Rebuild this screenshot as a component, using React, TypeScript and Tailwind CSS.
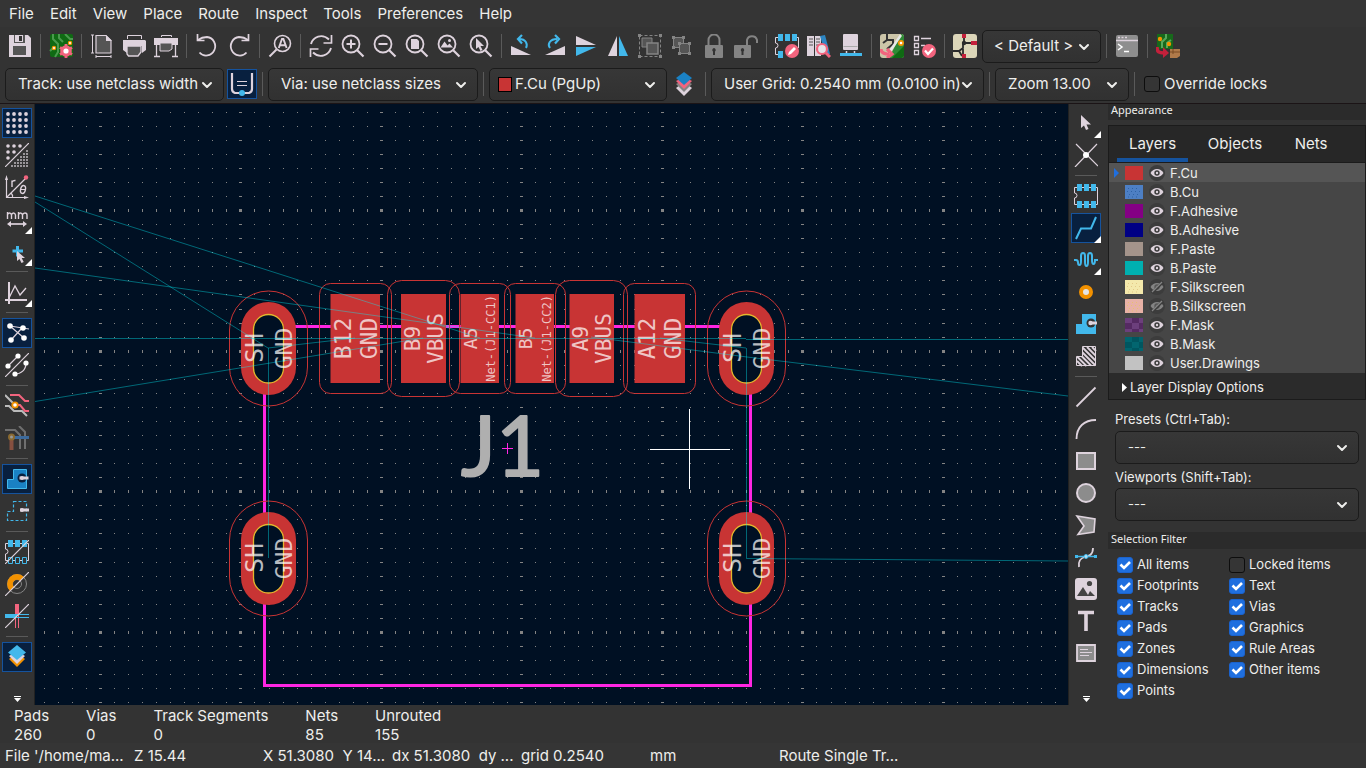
import React from "react";
import { ChevronDown } from "lucide-react";

type IconProps = { children: React.ReactNode; className?: string };

const Icon = ({ children, className = "h-6 w-6" }: IconProps) => (
  <svg viewBox="0 0 24 24" fill="none" className={`block shrink-0 ${className}`}>
    {children}
  </svg>
);

const L = "#ded3dd";
const B = "#42b8eb";
const R = "#f2647e";
const O = "#f29100";
const G = "#848484";

const Magnifier = ({ children }: { children?: React.ReactNode }) => (
  <Icon>
    <circle cx="10" cy="10" r="8.5" stroke={L} strokeWidth="1.8" />
    <path d="M16 16l6.5 6.5" stroke={L} strokeWidth="2.2" />
    {children}
  </Icon>
);

const icons: Record<string, React.ReactNode> = {
  save: (
    <Icon>
      <path d="M1 1h19l3 3v19H1z" fill={L} />
      <path d="M6 1h11v8H6z" fill="#555" />
      <path d="M7 1h8v7H7z" fill={L} />
      <path d="M11 2h3v5h-3z" fill="#333" />
      <path d="M5 12h13v9H5z" fill="#555" />
    </Icon>
  ),
  boardSetup: (
    <Icon>
      <rect x="1" width="23" height="23" rx="2" fill="#0f6a13" />
      <path d="M4 0v5l5 5v8l-3 5M10 0v4l4 4M16 0l5 5h3M1 17l4-4" stroke="#4a9a4d" strokeWidth="2" />
      <circle cx="5" cy="14" r="1.600" fill="#fff" stroke={O} strokeWidth="1.200" />
      <circle cx="21" cy="9" r="1.600" fill="#fff" stroke={O} strokeWidth="1.200" />
      <circle cx="17" cy="17" r="4.200" stroke={R} strokeWidth="3.200" />
      <path
        d="M17 10v14M11 13.500l12 7M11 20.500l12-7"
        stroke={R}
        strokeWidth="2.800"
      />
      <circle cx="17" cy="17" r="2.600" fill="#fff" />
    </Icon>
  ),
  pageSetup: (
    <Icon>
      <path d="M6 1.500h10l5 5V19H6z" fill="#555" stroke={L} strokeWidth="1.2" />
      <path d="M16 1v6h6z" fill={L} />
      <path d="M2.500 1v18M1 1h3M1 19h3M6 22.500h15M6 21v3M21 21v3" stroke={L} />
    </Icon>
  ),
  print: (
    <Icon>
      <path d="M5.500 5V1.500h14V5" stroke={L} />
      <path d="M1 6h22l1 1v9l-4 3V12H5v7l-4-3z" fill={L} />
      <path d="M5 12h14v6l-3 4H6.500L5 20z" fill="#555" stroke={L} strokeWidth="1.3" />
    </Icon>
  ),
  plot: (
    <Icon>
      <path d="M7.500 3V1.500h10V3" stroke={L} />
      <path d="M0 4h24v7H0z" fill={L} />
      <path d="M6 9h12v6l-3 2H6z" fill="#555" stroke={L} />
      <path d="M2.500 11v12M21.500 11v12M0 22.500h6M18 22.500h6" stroke={L} strokeWidth="1.3" />
    </Icon>
  ),
  undo: (
    <Icon>
      <path d="M3 6Q7 3 12 3a9 9.300 0 1 1-7.500 15.500" stroke={L} strokeWidth="1.8" />
      <path d="M2.500 0v6.500H9.500" stroke={L} strokeWidth="1.700" />
    </Icon>
  ),
  redo: (
    <Icon>
      <path d="M21 6Q17 3 12 3a9 9.300 0 1 0 7.500 15.500" stroke={L} strokeWidth="1.8" />
      <path d="M21.500 0v6.500H14.500" stroke={L} strokeWidth="1.700" />
    </Icon>
  ),
  find: (
    <Icon>
      <circle cx="14.500" cy="9.500" r="8" stroke={L} strokeWidth="1.6" />
      <path d="M8.500 15.500L1.500 22.500" stroke={L} strokeWidth="2" />
      <path d="M10.800 14l3.200-9h1.400l3.200 9M12.200 11.300h5" stroke={L} strokeWidth="1.9" />
    </Icon>
  ),
  refresh: (
    <Icon>
      <path d="M2 10C4 3 13-1 20 5.500M22 14c-2 7-11 11-18 4.500" stroke={L} strokeWidth="1.9" />
      <path d="M22.500 1v8h-8M1.500 23v-8h8" stroke={L} strokeWidth="1.7" />
    </Icon>
  ),
  zoomIn: (
    <Magnifier>
      <path d="M5.500 10h9M10 5.500v9" stroke={L} strokeWidth="2" />
    </Magnifier>
  ),
  zoomOut: (
    <Magnifier>
      <path d="M5.500 10h9" stroke={L} strokeWidth="2" />
    </Magnifier>
  ),
  zoomFit: (
    <Magnifier>
      <path d="M6 5h6l2 2v8H6z" fill={L} />
    </Magnifier>
  ),
  zoomObjects: (
    <Magnifier>
      <path d="M3.500 13.500l4-6 3 4 2-2 3.500 4z" fill={L} />
      <circle cx="12.500" cy="6.500" r="1.500" fill={L} />
    </Magnifier>
  ),
  zoomSelection: (
    <Magnifier>
      <path d="M7 4v11l2.500-2 2 4 2-1-2-4H15z" fill={L} />
    </Magnifier>
  ),
  rotateCcw: (
    <Icon>
      <path d="M1 12v9h20z" fill={L} />
      <path d="M16 14c2-4 0-9-7-9" stroke={B} strokeWidth="2" />
      <path d="M12 1L8 5l4 4.500" stroke={B} strokeWidth="2.200" />
    </Icon>
  ),
  rotateCw: (
    <Icon>
      <path d="M23 12v9H3z" fill={L} />
      <path d="M8 14C5 10 8 5 15 5" stroke={B} strokeWidth="2" />
      <path d="M13 1l4 4-4 4.500" stroke={B} strokeWidth="2.200" />
    </Icon>
  ),
  flipV: (
    <Icon>
      <path d="M2 2l20 9H2z" fill={L} />
      <path d="M2 22l20-9H2z" fill={B} />
    </Icon>
  ),
  flipH: (
    <Icon>
      <path d="M11 2v20H2z" fill={L} />
      <path d="M13 2v20h9z" fill={B} />
    </Icon>
  ),
  group: (
    <Icon>
      <path d="M1.500 1.500h21v21h-21z" stroke={G} strokeDasharray="3 2" />
      <path d="M4 4h10v9H4z" fill="#555" stroke={G} />
      <path d="M9 9h11v11H9z" fill="#555" stroke={G} strokeWidth="1.500" />
      <path d="M0 0h3v3H0zM21 0h3v3h-3zM0 21h3v3H0zM21 21h3v3h-3z" fill={G} />
    </Icon>
  ),
  ungroup: (
    <Icon>
      <path d="M3.500 3.500h10v10h-10z" fill="#555" stroke={G} />
      <path d="M9.500 9.500h10v10h-10z" fill="#555" stroke={G} />
      <path d="M2 2h3v3H2zM12 2h3v3h-3zM2 12h3v3H2zM8 8h3v3H8zM18 8h3v3h-3zM8 18h3v3H8zM18 18h3v3h-3z" fill={G} />
    </Icon>
  ),
  lock: (
    <Icon>
      <path d="M6.500 11V6a5.500 5.500 0 0 1 11 0v5" stroke={G} strokeWidth="2" />
      <rect x="3" y="11" width="18" height="13" rx="1" fill={G} />
      <path d="M12 14a2 2 0 0 1 1 3.500V21h-2v-3.500A2 2 0 0 1 12 14z" fill="#333" />
    </Icon>
  ),
  unlock: (
    <Icon>
      <path d="M13 11V6a5.200 5.200 0 0 1 10 0v3" stroke={G} strokeWidth="2" />
      <rect x="0" y="11" width="17" height="13" rx="1" fill={G} />
      <path d="M8.500 14a2 2 0 0 1 1 3.500V21h-2v-3.500a2 2 0 0 1 1-3.500z" fill="#333" />
    </Icon>
  ),
  footprintEdit: (
    <Icon>
      <path d="M4 3.500H.500V9a2.500 2.500 0 0 1 0 5v6.500H4M21 3.500h2.500V14" stroke={L} />
      <path d="M3 0h5v7H3zM10 0h5v7h-5zM17 0h5v7h-5zM3 17h5v7H3z" fill={B} />
      <circle cx="17" cy="17" r="7" fill={R} />
      <path d="M13 21l1-3 5-5 2 2-5 5z" fill="#fff" />
    </Icon>
  ),
  footprintLibrary: (
    <Icon>
      <path d="M0 2h7v20H0zM8 2h6v20H8z" fill={L} />
      <path d="M2 5h4M2 8h4M2 11h4M9 5h4M9 8h4M9 11h4" stroke="#555" />
      <path d="M13 2l5-1 5 19-4 1z" fill="#2d86c3" />
      <circle cx="15" cy="15" r="5" fill="#e5e5ea" stroke={R} strokeWidth="2.200" />
      <path d="M19 19l4 4" stroke={R} strokeWidth="3" />
    </Icon>
  ),
  updatePcb: (
    <Icon>
      <rect x="4" y="0" width="15" height="16" rx="1" fill={L} />
      <path d="M4.500 12.500h14" stroke="#aaa" />
      <path d="M7.500 17v3M15.500 17v3" stroke={L} strokeWidth="1.500" />
      <path d="M1 19h22v3H1z" fill={B} />
    </Icon>
  ),
  schematicUpdate: (
    <Icon>
      <rect width="24" height="24" rx="3" fill="#ccc5a8" />
      <path d="M21 0q3 0 3 3v18q0 3-3 3H9z" fill="#2f8a35" />
      <path d="M24 12v9q0 3-3 3H12z" fill="#0f6a13" />
      <path d="M7 0v6l-4 3M7 6h6v4l-6 5" stroke="#333" strokeWidth="2" />
      <path d="M21 1L8 20" stroke="#e8e8e8" strokeWidth="2.500" />
      <circle cx="21" cy="9" r="2.200" fill="#fff" stroke={O} strokeWidth="1.700" />
      <path d="M1 15c0 4 3 5 8 5M7 15l5 5-5 4" stroke={R} strokeWidth="3.200" />
    </Icon>
  ),
  drc: (
    <Icon>
      <path d="M2.500 2.500h4v4h-4zM2.500 9.500h4v4h-4zM2.500 16.500h4v4h-4zM9 4.500h10M9 11.500h4" stroke={L} strokeWidth="1.300" />
      <circle cx="17" cy="17" r="7" fill={R} />
      <path d="M13 16.500l3 3.500 5-5.500" stroke="#fff" strokeWidth="2.200" />
    </Icon>
  ),
  schematic: (
    <Icon>
      <rect width="24" height="24" rx="3" fill="#dcd6b9" />
      <path d="M11 4v5M0 17h6l4-3V9h8M10 15v9M6 17l3 5" stroke="#2b2b2b" strokeWidth="1.800" />
      <circle cx="11" cy="9" r="2.200" fill="#2b2b2b" />
      <path d="M9 0h4v4H9zM18 7h6v4h-6zM9 20h4v4H9z" fill="#c4203b" />
    </Icon>
  ),
  terminal: (
    <Icon>
      <rect x="1" y="1" width="22" height="22" rx="2" fill="#8e8e8e" />
      <path d="M1 6.500h22" stroke={L} strokeWidth="1.500" />
      <path d="M3 3.500h2M6.500 3.500h2M10 3.500h2" stroke={L} strokeWidth="1.500" />
      <path d="M3 10l4 3-4 3M9 17.500h5" stroke="#fff" strokeWidth="1.500" />
    </Icon>
  ),
  plugin: (
    <Icon>
      <rect x="1" y="0" width="16" height="15" fill="#17691b" />
      <path d="M6 14V8l4-4V0M11 14V9l4-3" stroke="#58a85b" strokeWidth="2" />
      <circle cx="4" cy="5" r="2.200" fill={O} />
      <circle cx="13" cy="10" r="2.200" fill={O} />
      <path d="M1 13c0 5 2 6 7 6" stroke="#c4203b" strokeWidth="3.500" />
      <path d="M7 13l6 6-6 5z" fill="#c4203b" />
      <path d="M14 15h10v7l-3 2h-7z" fill="#b07a4a" />
      <path d="M17 15v5M14 18h10" stroke="#7a4b22" />
    </Icon>
  ),
  trackAuto: (
    <Icon>
      <path d="M2 1v16q0 3 3 4h14q3-1 3-4V1" stroke={L} strokeWidth="2.200" />
      <path d="M7 9.500h10M7 13.500h10" stroke={L} />
      <circle cx="12" cy="21" r="3" fill={B} />
    </Icon>
  ),
  layerPair: (
    <Icon>
      <path d="M12 10l8 6-8 8-8-8z" fill={L} />
      <path d="M12 8l8 4-8 8-8-8z" fill={G} />
      <path d="M12 5l8 4-8 8-8-8z" fill={R} />
      <path d="M12 0l8 6-8 7-8-7z" fill="#1a81c4" />
    </Icon>
  ),
  gridDots: (
    <Icon>
      {[3, 9, 15, 21].map((y) => [3, 9, 15, 21].map((x) => <circle key={`${x}-${y}`} cx={x} cy={y} r="1.900" fill={L} />))}
    </Icon>
  ),
  gridOverride: (
    <Icon>
      <g fill={L}>
        <circle cx="3" cy="3" r="1.800" />
        <circle cx="9" cy="3" r="1.800" />
        <circle cx="15" cy="3" r="1.800" />
        <circle cx="3" cy="9" r="1.800" />
        <circle cx="9" cy="9" r="1.800" />
        <circle cx="3" cy="15" r="1.800" />
      </g>
      <path
        d="M21 8h2M18 11h5M15 14h8M12 17h11M9 20h14M6 23h17"
        stroke="#9a969a"
        strokeWidth="2"
        strokeDasharray="2 1"
      />
      <path d="M0 24L24 0" stroke={L} strokeWidth="1.200" />
    </Icon>
  ),
  polar: (
    <Icon>
      <path d="M1.500 23V3M1 22.500h21" stroke={L} strokeWidth="1.200" />
      <path d="M0 5l1.500-5L3 5zM19 21l5 1.500-5 1.500z" fill={L} />
      <path d="M2 22L21 3M6 18q2 2 1.500 4" stroke={L} strokeWidth="1.200" />
      <circle cx="21" cy="2.500" r="2.200" fill={R} />
      <path d="M7 12V5.500M7 7q1-1.700 3.500-1.500" stroke={L} strokeWidth="1.400" />
      <ellipse cx="18" cy="14.500" rx="2.400" ry="4" stroke={L} strokeWidth="1.400" transform="rotate(14 18 14.500)" />
      <path d="M16 14.500h4" stroke={L} />
    </Icon>
  ),
  millimeters: (
    <Icon>
      <path
        d="M2.500 12V5M2.500 8q.5-2 2-2t2 2v4M6.500 8q.5-2 2-2t2 2v4M13.500 12V5M13.500 8q.5-2 2-2t2 2v4M17.500 8q.5-2 2.500-2t2 2v4"
        stroke={L}
        strokeWidth="1.400"
      />
      <path d="M4 17h16" stroke={L} strokeWidth="1.700" />
      <path d="M2 17l4-3v6zM22 17l-4-3v6z" fill={L} />
    </Icon>
  ),
  cursorFull: (
    <Icon>
      <path d="M12.500 7v10.500M7.500 12h10.500" stroke={B} strokeWidth="3" />
      <path d="M12 12v10l2.500-2 2 4 2.200-1-2-4H20z" fill={L} />
    </Icon>
  ),
  plotAxes: (
    <Icon>
      <path d="M4 2v22M0 20h22" stroke={L} strokeWidth="2" />
      <path d="M4 18l6-12 5 9 6-7" stroke={L} strokeWidth="1.300" />
    </Icon>
  ),
  ratsnest: (
    <Icon>
      <path d="M5 5l19 3M17 7L6 19M5 5l14 12" stroke={L} strokeWidth="1.200" />
      <g fill="#fff">
        <circle cx="5" cy="5" r="2.800" />
        <circle cx="18" cy="7" r="2.800" />
        <circle cx="6" cy="19" r="2.800" />
        <circle cx="19" cy="17" r="2.800" />
      </g>
    </Icon>
  ),
  ratsnestCurved: (
    <Icon>
      <path d="M0 24L24 0M3 13L13 3M21 10c0 7-5 11-11 11" stroke={L} strokeWidth="1.200" />
      <g fill="#fff">
        <circle cx="13" cy="3" r="2.600" />
        <circle cx="3" cy="13" r="2.600" />
        <circle cx="21" cy="10" r="2.600" />
        <circle cx="10" cy="21" r="2.600" />
      </g>
    </Icon>
  ),
  netHighlight: (
    <Icon>
      <path d="M5 1h9l6 6h4M10 11h5l5 6h4" stroke={R} strokeWidth="2" />
      <path d="M0 1l9 9M0 12h4l5 5h8l5 5" stroke="#bbb" strokeWidth="2" />
      <circle cx="10" cy="11" r="2.700" fill="#fff" stroke={O} strokeWidth="1.800" />
    </Icon>
  ),
  netDim: (
    <Icon>
      <path d="M0 4h10l5 5v14M14 0l6 6v17" stroke="#6f6f6f" strokeWidth="2" />
      <path d="M6.500 12v12" stroke="#875040" strokeWidth="4" />
      <path d="M8 11.500h16" stroke="#3c6a9c" strokeWidth="3" />
      <circle cx="6.500" cy="11" r="2.500" fill="#999" stroke="#8a6a30" strokeWidth="2" />
    </Icon>
  ),
  zoneFill: (
    <Icon>
      <path d="M8.500 2.500h13v19h-19v-9h6z" fill="#1a81c4" stroke={B} />
      <circle cx="17" cy="11" r="4.500" fill="#08203f" />
      <path d="M14.500 9.500h9v3h-9z" fill={L} />
      <circle cx="17" cy="11" r="2" fill={L} />
    </Icon>
  ),
  zoneOutline: (
    <Icon>
      <path d="M8.500 2.500h13v19h-19v-9h6z" stroke={B} strokeWidth="1.200" strokeDasharray="3 2" />
      <path d="M15 9.500h9v3h-9z" fill={L} />
      <circle cx="17" cy="11" r="2" fill={L} />
    </Icon>
  ),
  padSketch: (
    <Icon>
      <path d="M.500 3.500h23v17H.500V14a2.500 2.500 0 0 0 0-5z" stroke={L} />
      <path d="M3 0h5v7H3zM10 0h5v7h-5zM17 0h5v7h-5z" fill={B} />
      <path d="M3.500 17.500h4v6h-4zM10.500 17.500h4v6h-4zM17.500 17.500h4v6h-4z" fill="#333" stroke={B} />
      <path d="M0 24L24 0" stroke={L} strokeWidth="1.200" />
    </Icon>
  ),
  viaSketch: (
    <Icon>
      <circle cx="12" cy="12" r="9.500" stroke={G} />
      <circle cx="12" cy="12" r="4.500" stroke={G} />
      <path d="M5 19A9.800 9.800 0 0 1 19 5l-4 4a4 4 0 0 0-6 6z" fill={O} />
      <path d="M0 24L24 0" stroke={L} strokeWidth="1.200" />
    </Icon>
  ),
  trackSketch: (
    <Icon>
      <path d="M12 0v12" stroke={R} strokeWidth="4" />
      <path d="M10.500 12v12M13.500 12v12" stroke={R} />
      <path d="M0 12h12" stroke={B} strokeWidth="4" />
      <path d="M12 10.500h12M12 13.500h12" stroke={B} />
      <path d="M0 24L24 0" stroke={L} strokeWidth="1.200" />
    </Icon>
  ),
  layersManager: (
    <Icon>
      <path d="M12 8l8 6-8 8-8-8z" fill={O} />
      <path d="M12 6l8 5-8 8-8-8z" fill={L} />
      <path d="M12 0l9 7.500-9 7.500-9-7.500z" fill={B} />
    </Icon>
  ),
  arrow: (
    <Icon>
      <path d="M7 4v13l3-2.500 2 4.500 2.500-1-2-4.500H17z" fill={L} />
    </Icon>
  ),
  localRats: (
    <Icon>
      <path d="M2 1l22 22M23 1L1 24" stroke={L} strokeWidth="1.200" />
      <circle cx="12" cy="12" r="3" fill="#fff" />
    </Icon>
  ),
  footprint: (
    <Icon>
      <path d="M.500 3.500h23v17H.500V14a2.500 2.500 0 0 0 0-5z" stroke={L} />
      <path d="M3 0h5v7H3zM10 0h5v7h-5zM17 0h5v7h-5zM3 17h5v7H3zM10 17h5v7h-5zM17 17h5v7h-5z" fill={B} />
    </Icon>
  ),
  route: (
    <Icon>
      <path d="M2 23l5-10.500h10L22 1" stroke={B} strokeWidth="2" />
    </Icon>
  ),
  tune: (
    <Icon>
      <path
        d="M0 12h2q2 0 2 2.500t1.500 2.500T7 13V8q0-3 2-3t2 3v6q0 4 1.500 4t1.500-4V8q0-3 2-3t2 3v4q0 4 1.500 4t1.500-4h3"
        stroke={B}
        strokeWidth="2"
      />
    </Icon>
  ),
  via: (
    <Icon>
      <circle cx="12" cy="12" r="5" fill="#e5e5e5" stroke={O} strokeWidth="4" />
    </Icon>
  ),
  zone: (
    <Icon>
      <path d="M8 2h14v20H2V12h6z" fill={B} />
      <circle cx="17" cy="11" r="4.500" fill="#333" />
      <path d="M16 9.500h7v3h-7z" fill={L} />
      <circle cx="16.500" cy="11" r="2.200" fill={L} />
    </Icon>
  ),
  ruleArea: (
    <Icon>
      <path d="M8.500 2.500h13v19h-19v-9h6z" stroke={L} />
      <path d="M3 17l5 5M3 12.500l9.500 9.500M8 12.500l9 9M8.500 8.500l13 13M8.500 3.500l13 13M13 3l8.500 8.500M18 3l4 4" stroke={L} strokeWidth="1.900" />
    </Icon>
  ),
  line: (
    <Icon>
      <path d="M2.500 21.500l19-19" stroke={L} strokeWidth="1.800" />
    </Icon>
  ),
  arc: (
    <Icon>
      <path d="M2.500 22C2.500 10 10 3 22 3" stroke={L} strokeWidth="1.800" />
    </Icon>
  ),
  rect: (
    <Icon>
      <path d="M3 4h18v16H3z" fill="#8c8c8c" stroke={L} strokeWidth="2" />
    </Icon>
  ),
  circle: (
    <Icon>
      <circle cx="12" cy="12" r="9" fill="#8c8c8c" stroke={L} strokeWidth="2" />
    </Icon>
  ),
  polygon: (
    <Icon>
      <path d="M3 3l18 3-1 13L4 21.500 10 13z" fill="#8c8c8c" stroke={L} strokeWidth="1.600" />
    </Icon>
  ),
  bezier: (
    <Icon>
      <path d="M5 22c-1-7 2-9 6-10s8-2 8-9" stroke={L} strokeWidth="1.800" />
      <path d="M2 11.500h20" stroke={B} strokeWidth="1.500" />
      <path d="M1 10h3v3H1zM20 10h3v3h-3z" fill={B} />
      <circle cx="12" cy="11.500" r="2" fill="#b5e0f5" stroke={B} />
    </Icon>
  ),
  image: (
    <Icon>
      <rect x="1" y="1" width="22" height="22" rx="3" fill={L} />
      <path d="M3 19l6-9 5 8 2-4 5 5z" fill="#444" />
      <circle cx="15.500" cy="6.500" r="2.600" fill="#444" />
    </Icon>
  ),
  text: (
    <Icon>
      <path d="M4 3.500h16M12 3v19" stroke={L} strokeWidth="3.600" />
    </Icon>
  ),
  textbox: (
    <Icon>
      <path d="M3 4h18v16H3z" fill="#8c8c8c" stroke={L} strokeWidth="1.800" />
      <path d="M6 8.500h8M6 11.500h12M6 14.500h9" stroke={L} strokeWidth="1.200" />
    </Icon>
  ),
};

const topRow = [
  "save", "|", "boardSetup", "|", "pageSetup", "print", "plot", "|", "undo", "redo", "|", "find", "|",
  "refresh", "zoomIn", "zoomOut", "zoomFit", "zoomObjects", "zoomSelection", "|",
  "rotateCcw", "rotateCw", "flipV", "flipH", "group", "ungroup", "lock", "unlock", "|",
  "footprintEdit", "footprintLibrary", "updatePcb", "|", "schematicUpdate", "drc", "|", "schematic",
];

const leftTools = [
  "gridDots*", "gridOverride", "polar", "millimeters+", "cursorFull+", "|", "plotAxes+", "|", "ratsnest*", "ratsnestCurved", "|",
  "netHighlight", "netDim", "|", "zoneFill*", "zoneOutline", "|", "padSketch", "viaSketch", "trackSketch", "|", "layersManager*",
];

const rightTools = [
  "arrow+", "localRats", "|", "footprint", "route*+", "tune+", "via", "zone", "ruleArea", "|",
  "line", "arc", "rect", "circle", "polygon", "bezier", "image", "text", "textbox",
];

const VSep = () => <div className="mx-1 h-6 w-px shrink-0 bg-[#5a5a5a]" />;

const TopButton = ({ name }: { name: string }) => (
  <button type="button" aria-label={name} className="flex h-8 w-8 shrink-0 items-center justify-center">
    {icons[name]}
  </button>
);

// "*" marks an active tool, "+" marks one with a palette
const SideBar = ({ tools, className }: { tools: string[]; className: string }) => (
  <div className={`flex shrink-0 flex-col pt-[3px] ${className}`}>
    <div className="flex w-[34px] grow flex-col items-center">
      {tools.map((tool, i) =>
        tool === "|" ? (
          <div key={i} className="my-1 h-px w-[22px] shrink-0 bg-[#5a5a5a]" />
        ) : (
          <button
            key={i}
            type="button"
            aria-label={tool.replace(/[*+]/g, "")}
            className={`relative my-px flex h-[30px] w-[30px] shrink-0 items-center justify-center border ${
              tool.includes("*") ? "border-[#15539e] bg-[#08203f]" : "border-transparent"
            }`}
          >
            {icons[tool.replace(/[*+]/g, "")]}
            {tool.includes("+") && (
              <svg viewBox="0 0 7 7" className="absolute -right-px -bottom-px h-[7px] w-[7px]">
                <path d="M7 0v7H0z" fill="#fff" />
              </svg>
            )}
          </button>
        )
      )}
      <button type="button" aria-label="More tools" className="mt-auto mb-[3px]">
        <svg viewBox="0 0 7 6" className="block h-[6px] w-[7px]">
          <path d="M0 0h7v1H0zM0 2h7L3.500 6z" fill="#fff" />
        </svg>
      </button>
    </div>
  </div>
);

type ComboProps = { label: string; value: string; className?: string; selectClass?: string; swatch?: boolean };

const Combo = ({ label, value, className = "", selectClass = "pl-3 text-[15px]", swatch }: ComboProps) => (
  <div className={`relative h-[33px] shrink-0 ${className}`}>
    <select
      aria-label={label}
      className={`h-full w-full appearance-none rounded-[5px] border border-[#1b1b1b] bg-linear-to-b from-[#373737] to-[#313131] pr-5 text-[#eeeeec] ${selectClass}`}
    >
      <option>{value}</option>
    </select>
    {swatch && <span className="pointer-events-none absolute top-[9px] left-[9px] h-[15px] w-[14px] border border-black bg-[#c83434]" />}
    <ChevronDown className="pointer-events-none absolute top-[9px] right-[9px] h-4 w-4 text-[#eeeeec]" strokeWidth={3} />
  </div>
);

const Check = ({ label, checked, className = "text-[13px]" }: { label: string; checked: boolean; className?: string }) => (
  <label className={`flex h-[21px] items-center gap-1 whitespace-nowrap ${className}`}>
    <span className="relative block h-4 w-4 shrink-0">
      <input
        type="checkbox"
        defaultChecked={checked}
        className="peer block h-4 w-4 appearance-none rounded-[3px] border border-[#0d0d0d] bg-[#353535] checked:border-[#1b62cc] checked:bg-[#1f6fdf]"
      />
      <svg viewBox="0 0 16 16" fill="none" className="pointer-events-none absolute inset-0 hidden peer-checked:block">
        <path d="M3.500 7.500l3.500 3.500L13 5" stroke="#fff" strokeWidth="2.600" />
      </svg>
    </span>
    {label}
  </label>
);

const layers = [
  { name: "F.Cu", color: "#c83434", visible: true },
  { name: "B.Cu", color: "#4d7fc4", dots: "#2f62a5", visible: true },
  { name: "F.Adhesive", color: "#840084", visible: true },
  { name: "B.Adhesive", color: "#000084", visible: true },
  { name: "F.Paste", color: "#a4948b", visible: true },
  { name: "B.Paste", color: "#00b0b0", visible: true },
  { name: "F.Silkscreen", color: "#f4e9ac", dots: "#e3c987", visible: false },
  { name: "B.Silkscreen", color: "#e8b2a7", dots: "#e8c070", visible: false },
  { name: "F.Mask", color: "#6c3f7c", checker: "#552a62", visible: true },
  { name: "B.Mask", color: "#02656f", checker: "#005660", visible: true },
  { name: "User.Drawings", color: "#c2c2c2", visible: true },
];

const Eye = ({ open }: { open: boolean }) => (
  <svg viewBox="0 0 16 16" fill="none" className="h-4 w-4">
    <circle cx="8" cy="8" r="8" fill="#3c3c3c" />
    <path d="M1.500 8Q4 4 8 4t6.500 4Q12 12 8 12T1.500 8z" fill={open ? L : G} />
    <circle cx="8" cy="8" r="2.700" fill={open ? "#3c3c3c" : "#555"} />
    <circle cx="8" cy="8" r="1.200" fill={open ? L : G} />
    {!open && <path d="M3 14L14 3" stroke="#3c3c3c" strokeWidth="2.500" />}
    {!open && <path d="M3 13L13 3" stroke={G} strokeWidth="1.200" />}
  </svg>
);

const Appearance = () => (
  <aside className="flex w-[258px] shrink-0 flex-col text-[13px]">
    <h2 className="h-4 bg-[#2b2b2b] pl-[3px] font-['Noto_Sans'] text-[11px] leading-[12px]">Appearance</h2>
    <div className="mt-[5px] border border-[#1b1b1b]">
      <div role="tablist" className="flex h-[37px] gap-2 border-b border-[#1b1b1b] bg-[#272727] pl-2 text-[15px]">
        <button type="button" role="tab" aria-selected="true" className="w-[71px] border-b-4 border-[#15539e] pt-1">
          Layers
        </button>
        <button type="button" role="tab" className="w-[78px] border-b-4 border-transparent pt-1">
          Objects
        </button>
        <button type="button" role="tab" className="w-[58px] border-b-4 border-transparent pt-1">
          Nets
        </button>
      </div>
      <ul className="bg-[#464646] pb-px">
        {layers.map((layer, i) => (
          <li key={layer.name} className={`flex h-[19px] items-center pt-px pl-[5px] ${i === 0 ? "bg-[#555555]" : ""}`}>
            <svg viewBox="0 0 5 10" className="h-[10px] w-[5px]">
              {i === 0 && <path d="M0 0l5 5-5 5z" fill="#1f6fdf" />}
            </svg>
            <svg viewBox="0 0 18 14" className="ml-[6px] h-[14px] w-[18px]">
              <path d="M0 0h18v14H0z" fill={layer.color} />
              {layer.checker && <path d="M7 0h7v5H7zM0 5h7v6H0zM14 5h4v6h-4zM7 11h7v3H7z" fill={layer.checker} />}
              {layer.dots && (
                <path d="M3 3.500h12M2 6.500h14M4 9.500h11M3 12h12" stroke={layer.dots} strokeDasharray="1 3" />
              )}
            </svg>
            <button type="button" aria-label={`Toggle ${layer.name}`} className="ml-[6px]">
              <Eye open={layer.visible} />
            </button>
            <span className="ml-[5px] pt-px">{layer.name}</span>
          </li>
        ))}
      </ul>
      <button type="button" className="flex h-[26px] w-full items-center gap-[3px] bg-[#2b2b2b] pt-[3px] pl-[13px]">
        <svg viewBox="0 0 5 9" className="h-[9px] w-[5px]">
          <path d="M0 0l5 4.500L0 9z" fill="#fff" />
        </svg>
        Layer Display Options
      </button>
    </div>

    <div className="flex flex-col pt-[11px] pr-[7px] pl-[7px]">
      <span className="h-5 leading-4">Presets (Ctrl+Tab):</span>
      <Combo label="Presets" value="---" selectClass="pl-3 text-[13px]" />
      <span className="mt-1 h-5 leading-[18px]">Viewports (Shift+Tab):</span>
      <Combo label="Viewports" value="---" selectClass="pl-3 text-[13px]" />
    </div>

    <h2 className="mt-[11px] h-[17px] bg-[#2b2b2b] pl-[3px] font-['Noto_Sans'] text-[11px] leading-[13px]">
      Selection Filter
    </h2>
    <div className="grid grid-cols-[112px_1fr] pt-[5px] pl-[9px]">
      <Check label="All items" checked />
      <Check label="Locked items" checked={false} />
      <Check label="Footprints" checked />
      <Check label="Text" checked />
      <Check label="Tracks" checked />
      <Check label="Vias" checked />
      <Check label="Pads" checked />
      <Check label="Graphics" checked />
      <Check label="Zones" checked />
      <Check label="Rule Areas" checked />
      <Check label="Dimensions" checked />
      <Check label="Other items" checked />
      <Check label="Points" checked />
    </div>
  </aside>
);

const range = (from: number, to: number) => Array.from({ length: to - from + 1 }, (_, i) => from + i);

const gridPath = range(-17, 58)
  .map((col) =>
    range(-17, 25)
      .map((row) => {
        const x = Math.floor(240.9 + col * 14.05);
        const y = Math.floor(351.2 + row * 14.06);
        const dx = col % 10 === 0 ? 1 : 0;
        const dy = row % 10 === 0 ? 1 : 0;
        return `M${x - dx} ${y - dy}h${1 + 2 * dx}v${1 + 2 * dy}h${-1 - 2 * dx}z`;
      })
      .join("")
  )
  .join("");

const pads = [
  { x: 330.5, w: 49.5, clear: 319.5, tall: false, name: "B12", nx: 351, net: "GND", tx: 377, size: 23, netSize: 23 },
  { x: 401, w: 45, clear: 387.5, tall: true, name: "B9", nx: 420, net: "VBUS", tx: 443, size: 21, netSize: 21 },
  { x: 460.5, w: 38.5, clear: 449.5, tall: false, name: "A5", nx: 477, net: "Net-(J1-CC1)", tx: 495, size: 18, netSize: 12 },
  { x: 515.5, w: 38.5, clear: 504.5, tall: false, name: "B5", nx: 532, net: "Net-(J1-CC2)", tx: 551, size: 18, netSize: 12 },
  { x: 569.5, w: 44.5, clear: 555.5, tall: true, name: "A9", nx: 588, net: "VBUS", tx: 611, size: 21, netSize: 21 },
  { x: 634.5, w: 50.5, clear: 623.5, tall: false, name: "A12", nx: 655, net: "GND", tx: 681, size: 23, netSize: 23 },
];

const ratsnest =
  "M35 196L480 338M35 202L268 348M35 268L535 338M35 338.500H268M35 401.500L423 338M268.500 348V558M268 348L355 338M268 338.500H746M591 337L747 357L1068 396M660 338L746 348M746.500 348V558.500L1068 561M746 339.500H1068";

const PadText = ({ x, y, size, children }: { x: number; y: number; size: number; children: string }) => (
  <text transform={`translate(${x} ${y}) rotate(-90)`} fontSize={size} textAnchor="middle" fill="#fff" fillOpacity="0.72">
    {children}
  </text>
);

const BoardCanvas = () => (
  <svg
    viewBox="35 104 1033 601"
    preserveAspectRatio="xMidYMid slice"
    className="block h-full min-h-0 w-full min-w-0 bg-[#001023] font-['DejaVu_Sans_Mono',monospace]"
  >
    <path d={gridPath} fill="#848484" shapeRendering="crispEdges" />
    <path d="M264.500 326.500H750.500V685.500H264.500z" fill="none" stroke="#ff26e2" strokeWidth="3" />
    <text
      x="461"
      y="476"
      fontSize="83"
      fill="#afafaf"
      stroke="#afafaf"
      strokeWidth="2"
      strokeLinejoin="round"
      className="font-['Lato',sans-serif]"
    >
      J1
    </text>
    {pads.map((pad) => (
      <g key={pad.name}>
        <rect x={pad.x} y="294" width={pad.w} height="89" fill="#c83434" />
        <rect
          x={pad.clear}
          y={pad.tall ? 280.5 : 283.5}
          width={pad.name === "A5" || pad.name === "B5" ? 61 : 72}
          height={pad.tall ? 116 : 110}
          rx={pad.tall ? 14 : 11}
          fill="none"
          stroke="#c83434"
        />
        <PadText x={pad.nx} y={338.5} size={pad.size}>
          {pad.name}
        </PadText>
        <PadText x={pad.tx} y={338.5} size={pad.netSize}>
          {pad.net}
        </PadText>
      </g>
    ))}
    {[0, 478].map((dx) =>
      [0, 210].map((dy) => (
        <g key={`${dx}-${dy}`} transform={`translate(${dx} ${dy})`}>
          <rect x="241" y="302" width="55" height="93" rx="27.500" fill="#c83434" />
          <rect x="253.500" y="314.500" width="30" height="68.500" rx="15" fill="#001023" stroke="#e3b72e" strokeWidth="1.300" />
          <rect x="229.500" y="291" width="78" height="115" rx="39" fill="none" stroke="#c83434" />
          <PadText x={263} y={348} size={25}>
            SH
          </PadText>
          <PadText x={292} y={348.5} size={23}>
            GND
          </PadText>
        </g>
      ))
    )}
    <path d={ratsnest} fill="none" stroke="#00f8ff" strokeOpacity="0.38" />
    <path d="M502 448.500h11M507.500 443v11" stroke="#ff26e2" />
    <path d="M650 449.500h80M689.500 409v80" stroke="#fff" />
  </svg>
);

const menus = ["File", "Edit", "View", "Place", "Route", "Inspect", "Tools", "Preferences", "Help"];

const boardInfo = [
  ["Pads", "260"],
  ["Vias", "0"],
  ["Track Segments", "0"],
  ["Nets", "85"],
  ["Unrouted", "155"],
];

const statusFields = ["File '/home/ma...", "Z 15.44", "X 51.3080  Y 14...", "dx 51.3080  dy ...", "grid 0.2540", "mm", "Route Single Tr..."];

const App = () => {
  return (
    <div className="flex h-screen flex-col overflow-hidden bg-[#333333] font-['Inter',sans-serif] text-[15px] text-[#eeeeec]">
      <nav className="flex h-[27px] shrink-0 items-center gap-4 bg-[#353535] pt-px pl-[9px]">
        {menus.map((menu) => (
          <button key={menu} type="button">
            {menu}
          </button>
        ))}
      </nav>

      <div className="flex h-[38px] shrink-0 items-center pl-1">
        {topRow.map((name, i) => (name === "|" ? <VSep key={i} /> : <TopButton key={i} name={name} />))}
        <Combo label="Layer preset" value="< Default >" className="mx-px w-[119px]" selectClass="pl-[11px] text-[15px]" />
        <VSep />
        <TopButton name="terminal" />
        <VSep />
        <TopButton name="plugin" />
      </div>

      <div className="flex h-[38px] shrink-0 items-center gap-px pl-[5px]">
        <Combo label="Track width" value="Track: use netclass width" className="w-[219px]" />
        <button
          type="button"
          aria-label="Use starting track width"
          className="ml-[2px] flex h-[30px] w-[30px] shrink-0 items-center justify-center border border-[#15539e] bg-[#08203f]"
        >
          {icons.trackAuto}
        </button>
        <VSep />
        <Combo label="Via size" value="Via: use netclass sizes" className="w-[210px]" />
        <VSep />
        <Combo label="Active layer" value="F.Cu (PgUp)" className="w-[178px]" selectClass="pl-[25px] text-[15px]" swatch />
        <TopButton name="layerPair" />
        <VSep />
        <Combo label="Grid" value="User Grid: 0.2540 mm (0.0100 in)" className="w-[273px]" />
        <VSep />
        <Combo label="Zoom" value="Zoom 13.00" className="w-[134px]" />
        <VSep />
        <Check label="Override locks" checked={false} className="ml-1 text-[15px]" />
      </div>

      <main className="flex min-h-0 flex-1 border-t border-[#1b1416]">
        <SideBar tools={leftTools} className="w-[35px] border-r border-[#222]" />
        <div className="min-w-0 flex-1">
          <BoardCanvas />
        </div>
        <SideBar tools={rightTools} className="w-10 border-l border-[#222]" />
        <Appearance />
      </main>

      <section className="flex h-[38px] shrink-0 gap-[37px] pt-px pl-[14px]">
        {boardInfo.map(([label, value]) => (
          <div key={label} className="flex flex-col leading-[19px]">
            <span>{label}</span>
            <span>{value}</span>
          </div>
        ))}
      </section>

      <footer className="flex h-[25px] shrink-0 items-center bg-[#353535] pt-[2px] pl-[5px]">
        {statusFields.map((field) => (
          <span key={field} className="w-[129px] shrink-0 whitespace-pre">
            {field}
          </span>
        ))}
      </footer>
    </div>
  );
};

export default App;
